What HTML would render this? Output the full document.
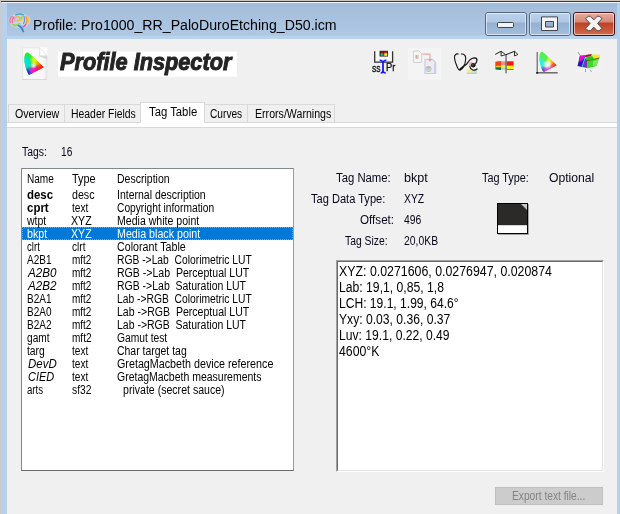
<!DOCTYPE html>
<html><head><meta charset="utf-8"><title>Profile Inspector</title>
<style>
html,body{margin:0;padding:0;}
body{width:620px;height:514px;position:relative;overflow:hidden;background:#b9d1ea;font-family:"Liberation Sans",sans-serif;}
.a{position:absolute;}
.t{position:absolute;white-space:pre;transform-origin:0 0;font-family:"Liberation Sans",sans-serif;}
#frame{left:0;top:0;width:620px;height:514px;background:#b9d1ea;}
#topbeige{left:0;top:0;width:620px;height:1px;background:#cbc7c0;}
#topdark{left:1px;top:1px;width:619px;height:1px;background:#3c3c3c;}
#topwhite{left:2px;top:2px;width:618px;height:1px;background:#eef4fb;}
#leftgray{left:0;top:1px;width:1px;height:513px;background:#c9c9cf;}
#title{left:2px;top:3px;width:618px;height:36px;background:linear-gradient(#a1bbda 0px,#a7c1de 14px,#aec8e4 32px,#b8d1ec 33.500px,#bad3ee 36px);}
#leftband{left:1px;top:3px;width:6px;height:511px;background:#b7d0eb;}
#rightband{left:617px;top:3px;width:3px;height:511px;background:#b7d0eb;}
#client{left:7px;top:39px;width:610px;height:475px;background:#f0f0f0;}
.cap{top:12px;height:24px;box-sizing:border-box;border:1px solid #55687f;border-radius:3px;}
.cap i{position:absolute;left:0;top:0;right:0;bottom:0;border:1px solid rgba(255,255,255,.55);border-radius:2px;}
.capb{background:linear-gradient(#bcd2eb 0,#b0c8e5 9px,#95b0d1 10px,#a3bddc 22px);}
.capr{background:linear-gradient(#e6ad9f 0,#d58875 9px,#bf4023 10px,#d06a4c 22px);border-color:#431418;}
#tabstrip{left:7px;top:122px;width:610px;height:6px;background:#fff;box-sizing:border-box;border-top:1px solid #d9d9d9;border-bottom:1px solid #d9d9d9;}
.tab{top:104px;height:18px;box-sizing:border-box;border:1px solid #d9d9d9;border-bottom:none;background:#f0f0f0;}
.tabsel{top:102px;height:20px;background:#fff;border:1px solid #d9d9d9;border-bottom:none;box-sizing:border-box;}
#list{left:21px;top:168px;width:273px;height:303px;box-sizing:border-box;background:#fff;border:1px solid #828790;border-right-color:#9a9a9a;border-bottom-color:#6a6a6a;}
#sel{left:22px;top:227px;width:271px;height:13px;background:#0078d7;box-sizing:border-box;border:1px dotted #e78b2d;}
#tbox{left:336px;top:260px;width:268px;height:212px;box-sizing:border-box;background:#fff;border-top:1px solid #a0a0a0;border-left:1px solid #a0a0a0;border-right:1px solid #fff;border-bottom:1px solid #fff;}
#tbox i{position:absolute;left:0;top:0;right:0;bottom:0;border-top:1px solid #696969;border-left:1px solid #696969;border-right:1px solid #e3e3e3;border-bottom:1px solid #e3e3e3;}
#btn{left:495px;top:487px;width:108px;height:18px;background:#cccccc;box-sizing:border-box;border:1px solid #bfbfbf;}
</style></head>
<body>
<div class="a" id="frame"></div>
<div class="a" id="title"></div>
<div class="a" id="leftband"></div>
<div class="a" id="rightband"></div>
<div class="a" id="topbeige"></div>
<div class="a" id="topdark"></div>
<div class="a" id="topwhite"></div>
<div class="a" id="leftgray"></div>
<div class="a" id="client"></div>

<!-- caption buttons -->
<div class="a cap capb" style="left:485px;width:42px;"><i></i></div>
<div class="a cap capb" style="left:529px;width:42px;"><i></i></div>
<div class="a cap capr" style="left:573px;width:42px;"><i></i></div>
<svg class="a" style="left:480px;top:0" width="140" height="40" viewBox="480 0 140 40">
  <rect x="497.5" y="22.5" width="16" height="5" fill="#f4f4f4" stroke="#3d4650" stroke-width="1" rx="1"/>
  <path d="M541.5 16.9h16v13.6h-16z M545.5 21.5v5.5h8v-5.5z" fill="#f4f4f4" fill-rule="evenodd" stroke="#3d4650" stroke-width="1" stroke-linejoin="round"/>
  <path d="M585.5 18.5l3-2.2h2l3.3 3.6 3.3-3.6h2l3 2.2-4.6 5 4.6 5-3 2.2h-2l-3.3-3.6-3.3 3.6h-2l-3-2.2 4.6-5z" fill="#f4f4f4" stroke="#5a4a4a" stroke-width="1" stroke-linejoin="round"/>
</svg>

<!-- app icon (brain) -->
<svg class="a" style="left:4px;top:8px" width="32" height="30" viewBox="4 8 32 30">
  <defs><filter id="bl" x="-20%" y="-20%" width="140%" height="140%"><feGaussianBlur stdDeviation=".45"/></filter></defs>
  <ellipse cx="19.500" cy="20.500" rx="11" ry="7.500" fill="#dfe4f2" opacity=".55" filter="url(#bl)"/>
  <g fill="none" stroke-linecap="round" filter="url(#bl)" opacity=".95">
    <path d="M15.500 14.800c2.500-1 5.500-1 8 0" stroke="#3aa6c8" stroke-width="1.300"/>
    <path d="M10.300 22.500c-.8-2.500 0-5 1.800-6.300M12.500 22.800c-.6-2.300 0-4.500 1.500-5.800" stroke="#ee6f96" stroke-width="1.400"/>
    <path d="M14.800 21.500c-.3-2 .3-3.800 1.600-4.800" stroke="#f29ab0" stroke-width="1.200"/>
    <path d="M16.500 17.200c1.200-.8 2.400-.6 3 .3M17 20.500c2 .4 4-.3 5.200-2.300" stroke="#f3b63c" stroke-width="1.400"/>
    <path d="M19.500 18.500c1.300-.2 2.400-1 3-2.200" stroke="#a6d64c" stroke-width="1.300"/>
    <path d="M12.500 24.300c2.300.9 5 .6 7-.9M14 25.600c1.500.4 3 .2 4-.4" stroke="#9bd45a" stroke-width="1.400"/>
    <path d="M24 16.500c.8 2.500.7 5-.3 7" stroke="#5b7fd8" stroke-width="1"/>
    <path d="M26 16.300c1.200 2.200 1.300 4.800.3 6.800" stroke="#f59a3c" stroke-width="1.500"/>
    <path d="M28 17.300c.9 1.800.9 3.800.1 5.300" stroke="#f6c64a" stroke-width="1.200"/>
    <path d="M22.800 26.800c1.300-.3 2.400-1.200 3-2.500" stroke="#ea4f8c" stroke-width="1.500"/>
    <path d="M18.500 25.500c2 1 3.800 3 4.800 6" stroke="#2f86cf" stroke-width="1.700"/>
    <path d="M20 25c1.500.3 2.800 1.500 3.300 3" stroke="#6bb4e6" stroke-width="1"/>
  </g>
</svg>

<!-- logo -->
<svg class="a" style="left:56px;top:50px" width="184" height="29" viewBox="56 50 184 29"><rect x="58" y="51.600" width="179" height="25.100" fill="#fff"/></svg>
<svg class="a" style="left:20px;top:45px" width="30" height="36" viewBox="20 45 30 36">
  <defs>
    <filter id="bd" x="-20%" y="-20%" width="140%" height="140%"><feGaussianBlur stdDeviation=".5"/></filter>
    <radialGradient id="aC" gradientUnits="userSpaceOnUse" cx="24.5" cy="63" r="9"><stop offset="0" stop-color="#00e4f4" stop-opacity="1"/><stop offset="0.55" stop-color="#00e0f0" stop-opacity="0.8"/><stop offset="1" stop-color="#00e0f0" stop-opacity="0"/></radialGradient>
    <radialGradient id="aY" gradientUnits="userSpaceOnUse" cx="36" cy="60" r="6.5"><stop offset="0" stop-color="#fcf800" stop-opacity="1"/><stop offset="0.5" stop-color="#f8f410" stop-opacity="0.8"/><stop offset="1" stop-color="#f0f020" stop-opacity="0"/></radialGradient>
    <radialGradient id="aB" gradientUnits="userSpaceOnUse" cx="27.5" cy="74.5" r="8"><stop offset="0" stop-color="#1010ff" stop-opacity="1"/><stop offset="0.5" stop-color="#1828ff" stop-opacity="0.85"/><stop offset="1" stop-color="#2050ff" stop-opacity="0"/></radialGradient>
    <radialGradient id="aM" gradientUnits="userSpaceOnUse" cx="34.5" cy="70.5" r="6.5"><stop offset="0" stop-color="#ff08e0" stop-opacity="1"/><stop offset="0.5" stop-color="#ff10d8" stop-opacity="0.85"/><stop offset="1" stop-color="#ff20c0" stop-opacity="0"/></radialGradient>
    <radialGradient id="aR" gradientUnits="userSpaceOnUse" cx="44" cy="67.3" r="8"><stop offset="0" stop-color="#ff0808" stop-opacity="1"/><stop offset="0.45" stop-color="#ff2010" stop-opacity="0.85"/><stop offset="1" stop-color="#ff5010" stop-opacity="0"/></radialGradient>
    <radialGradient id="aW" gradientUnits="userSpaceOnUse" cx="33.5" cy="65.5" r="3.5"><stop offset="0" stop-color="#ffffff" stop-opacity="1"/><stop offset="0.4" stop-color="#ffffff" stop-opacity="0.6"/><stop offset="1" stop-color="#ffffff" stop-opacity="0"/></radialGradient>
    <radialGradient id="bC" gradientUnits="userSpaceOnUse" cx="24.5" cy="66" r="8"><stop offset="0" stop-color="#20f0ff" stop-opacity="1"/><stop offset="0.55" stop-color="#30f0ff" stop-opacity="0.8"/><stop offset="1" stop-color="#30f0ff" stop-opacity="0"/></radialGradient>
    <radialGradient id="bY" gradientUnits="userSpaceOnUse" cx="37.5" cy="61.5" r="6"><stop offset="0" stop-color="#fcfc20" stop-opacity="1"/><stop offset="0.5" stop-color="#f8f830" stop-opacity="0.8"/><stop offset="1" stop-color="#f0f040" stop-opacity="0"/></radialGradient>
    <radialGradient id="bB" gradientUnits="userSpaceOnUse" cx="28" cy="75" r="7"><stop offset="0" stop-color="#2828ff" stop-opacity="1"/><stop offset="0.5" stop-color="#3040ff" stop-opacity="0.8"/><stop offset="1" stop-color="#4060ff" stop-opacity="0"/></radialGradient>
    <radialGradient id="bM" gradientUnits="userSpaceOnUse" cx="34" cy="72.5" r="6"><stop offset="0" stop-color="#ff30f0" stop-opacity="1"/><stop offset="0.5" stop-color="#ff40e8" stop-opacity="0.8"/><stop offset="1" stop-color="#ff50e0" stop-opacity="0"/></radialGradient>
    <radialGradient id="bR" gradientUnits="userSpaceOnUse" cx="44" cy="67.3" r="7"><stop offset="0" stop-color="#ff1818" stop-opacity="1"/><stop offset="0.5" stop-color="#ff3828" stop-opacity="0.85"/><stop offset="1" stop-color="#ff6030" stop-opacity="0"/></radialGradient>
    <radialGradient id="bW" gradientUnits="userSpaceOnUse" cx="33.5" cy="66.5" r="5.2"><stop offset="0" stop-color="#ffffff" stop-opacity="1"/><stop offset="0.45" stop-color="#ffffff" stop-opacity="0.75"/><stop offset="1" stop-color="#ffffff" stop-opacity="0"/></radialGradient>
    <radialGradient id="aO" gradientUnits="userSpaceOnUse" cx="40" cy="63.8" r="5.5"><stop offset="0" stop-color="#ffb000" stop-opacity="1"/><stop offset="0.5" stop-color="#ffa000" stop-opacity="0.8"/><stop offset="1" stop-color="#ff9000" stop-opacity="0"/></radialGradient>
    <radialGradient id="aP" gradientUnits="userSpaceOnUse" cx="39" cy="69.3" r="5"><stop offset="0" stop-color="#ff1050" stop-opacity="1"/><stop offset="0.5" stop-color="#ff1060" stop-opacity="0.8"/><stop offset="1" stop-color="#ff2070" stop-opacity="0"/></radialGradient>
    <radialGradient id="bO" gradientUnits="userSpaceOnUse" cx="40" cy="64" r="5"><stop offset="0" stop-color="#ffc020" stop-opacity="1"/><stop offset="0.5" stop-color="#ffb020" stop-opacity="0.8"/><stop offset="1" stop-color="#ffa020" stop-opacity="0"/></radialGradient>
    <radialGradient id="bP" gradientUnits="userSpaceOnUse" cx="39" cy="69.5" r="4.5"><stop offset="0" stop-color="#ff4080" stop-opacity="1"/><stop offset="0.5" stop-color="#ff4080" stop-opacity="0.7"/><stop offset="1" stop-color="#ff5090" stop-opacity="0"/></radialGradient>
    <path id="gp" d="M26.600 52.600C28 52.200 29 53 30 54L43.800 67.300 30.500 74.300C29.500 75 28.500 74.800 28 73.500 26 69 24 63 24.400 58 24.600 55 25.300 53.200 26.600 52.600Z"/>
    <g id="gamutA"><use href="#gp" fill="#20f020"/><use href="#gp" fill="url(#aC)"/><use href="#gp" fill="url(#aY)"/><use href="#gp" fill="url(#aO)"/><use href="#gp" fill="url(#aB)"/><use href="#gp" fill="url(#aM)"/><use href="#gp" fill="url(#aP)"/><use href="#gp" fill="url(#aR)"/><use href="#gp" fill="url(#aW)"/></g>
    <g id="gamutB"><use href="#gp" fill="#50f250"/><use href="#gp" fill="url(#bC)"/><use href="#gp" fill="url(#bY)"/><use href="#gp" fill="url(#bO)"/><use href="#gp" fill="url(#bB)"/><use href="#gp" fill="url(#bM)"/><use href="#gp" fill="url(#bP)"/><use href="#gp" fill="url(#bR)"/><use href="#gp" fill="url(#bW)"/></g>
    <linearGradient id="pg" x1="0" y1="0" x2="1" y2="0"><stop offset="0" stop-color="#f1f1f1"/><stop offset=".12" stop-color="#fafafa"/><stop offset=".85" stop-color="#f7f7f7"/><stop offset="1" stop-color="#e6e6e6"/></linearGradient>
  </defs>
  <rect x="38" y="47.500" width="9.200" height="9" fill="#fff"/>
  <path d="M22.500 47.800h17l7.500 8v23.700h-24.500z" fill="url(#pg)" stroke="#e4e4e4" stroke-width=".8"/>
  <path d="M39.500 48l7.500 7.800v3.500l-8-3z" fill="#c8c8c8" opacity=".6" filter="url(#bd)"/>
  <path d="M39.500 47.800l7.500 8h-5c-1.800 0-2.500-.8-2.500-2.500z" fill="#fdfdfd" stroke="#e0e0e0" stroke-width=".6"/>
  <path d="M22.500 79.500h24.500" stroke="#d8d8d8" stroke-width="1"/>
  <use href="#gamutA"/>
</svg>

<!-- toolbar icons -->
<svg class="a" style="left:365px;top:42px" width="245" height="40" viewBox="365 42 245 40">
  <defs>
    <filter id="b3" x="-20%" y="-20%" width="140%" height="140%"><feGaussianBlur stdDeviation=".35"/></filter>
    <filter id="b6" x="-20%" y="-20%" width="140%" height="140%"><feGaussianBlur stdDeviation=".55"/></filter>
  </defs>
  <!-- icon1 -->
  <path d="M374.700 51.300v10.900h17.900v-10.900" fill="#f8f8f8" stroke="#333" stroke-width="1.300"/>
  <rect x="379.600" y="50.800" width="8.300" height="5.700" fill="#111"/>
  <rect x="380.500" y="51.300" width="3.100" height="1.500" fill="#c01818"/><rect x="384.200" y="51.300" width="3" height="1.500" fill="#f01818"/>
  <rect x="380.500" y="53.200" width="3.100" height="2.700" fill="#20b080"/><rect x="384.200" y="53.200" width="3" height="2.700" fill="#f4f010"/>
  <path d="M379.600 60.300c2.200 0 3.300 1 3.300 2.800v7.900c0 1.200-.8 1.900-2.200 2M386.400 60.300c-2.200 0-3.300 1-3.300 2.800v7.900c0 1.200.8 1.900 2.600 2" fill="none" stroke="#1818ff" stroke-width="1.600"/>
  <!-- icon2 faded -->
  <rect x="408" y="48" width="33" height="31.800" fill="#f4f4f4"/>
  <path d="M413.500 51h5.500l2.700 2.700v8.800h-8.200z" fill="#f5f5f5" stroke="#cdcdcd" stroke-width=".9"/>
  <rect x="415.500" y="55" width="1.600" height="3.800" fill="#d8a8a0"/><rect x="417.100" y="55" width="1.500" height="3.800" fill="#b8d8a8"/>
  <path d="M425 59.200h7.300l3.400 3.400v10.900h-10.700z" fill="#ececf4" stroke="#c6c8e4" stroke-width="1.100"/>
  <path d="M434.600 63v10" stroke="#cfd0ea" stroke-width="1.400" fill="none"/>
  <path d="M422.300 54.200h7.600v5.500" fill="none" stroke="#f2a6a6" stroke-width="1.200"/>
  <path d="M427.700 59h4.400l-2.200 2.800z" fill="#f09c9c"/>
  <g filter="url(#b3)"><circle cx="428.600" cy="69" r="2.900" fill="#b8b8c4"/><path d="M428.600 69l-2.300-1.200a2.600 2.600 0 0 1 4.600-.2z" fill="#f0a8a8"/><path d="M428.600 69l2.300-1.400a2.600 2.600 0 0 1-1.600 3.900z" fill="#b4e4a4"/><path d="M428.600 69l.7 2.500a2.600 2.600 0 0 1-3-3.700z" fill="#c4d0f0"/></g>
  <!-- icon3 stethoscope -->
  <path d="M468 67l4-1 5 2.500v4.500h-10.500z" fill="#fbfbf3"/>
  <path d="M467.600 68.500h4.300l.3 4h-5.400z" fill="#f3ee82"/>
  <path d="M472.200 70h4.800v2.800h-4.800z" fill="#bfe8cc"/>
  <path d="M466.500 73.200h10.600" stroke="#b4b4b4" stroke-width="1" fill="none"/>
  <circle cx="471" cy="64" r="2.200" fill="#f2b4bc" filter="url(#b3)"/>
  <g fill="none" stroke="#151515" stroke-width="1.100" stroke-linecap="round" stroke-linejoin="round">
    <path d="M458.300 54c-1.300-.2-2.300 0-2.800.7-1 .8-1.200 1.800-1 3.100.2 2.200.8 4.200 1.600 6.200.6 1.800 1.300 3.600 2.200 5 .5.800 1.100 1.100 1.700.9"/>
    <path d="M461.400 54c1.300-.1 2.400.2 3.100 1 1 1 1.300 2.200 1.200 3.500-.1 2-.4 3.800-.9 5.500-.5 1.400-1.400 2.600-2.500 3.500-.8.700-1.600 1.500-2.300 2.300"/>
    <path d="M459.600 69.600c.6-1.200 1.800-2.200 3.200-2.700M460.200 70c1.500-.5 2.600-1.500 3-2.900"/>
    <path d="M463 67c1.400-1 2.600-2 3.700-3 1.200-1.600 2.300-3.300 3.700-4.600 1.300-1 2.800-1.600 4.400-1.600 1.400.1 2.200 1 2.200 2.200-.1 1.500-.8 2.900-1.600 4" stroke-width="1.250"/>
    <path d="M469.800 66.500c.2 1.500 1.300 2.800 3.100 3.500 1.500.4 3 0 4.100-1" stroke-width="1.250"/>
  </g>
  <circle cx="473.200" cy="65.300" r="2.300" fill="#1c1c1c"/><circle cx="472.900" cy="64.900" r=".7" fill="#7a8a80"/>
  <!-- icon4 balance -->
  <g filter="url(#b3)">
  <path d="M495.500 61.800l5.700-.5v8.700l-5.700-.5z" fill="#0c6a40"/>
  <path d="M496 62l5.200-.4v4l-5.200.2z" fill="#f04418"/>
  <path d="M496 65.800l5.200-.2v1.600l-5.200.2z" fill="#f0c020"/>
  <rect x="501.200" y="61.300" width="5" height="3.800" fill="#f48c84"/><rect x="501.200" y="65.100" width="5" height="2.400" fill="#f4ee50"/><rect x="501.200" y="67.500" width="5" height="2.300" fill="#a0dcb0"/>
  <rect x="506.800" y="61.300" width="6.800" height="4.500" fill="#f01c10"/><rect x="506.800" y="65.800" width="6.800" height="3.300" fill="#f8f410"/><rect x="506.800" y="69.100" width="6.800" height=".9" fill="#508030"/>
  </g>
  <rect x="505.500" y="54.700" width="1.100" height="18.700" fill="#4c4c4c"/>
  <path d="M495.200 54.400l5.900-3.100M506 54.700l8.500-3.400" fill="none" stroke="#1a1a1a" stroke-width="1"/>
  <path d="M501.100 51.300v4.700l4.600-1.300zM514.500 51.300v4.700l3.400-1.600z" fill="#fafafa" stroke="#1a1a1a" stroke-width=".9" stroke-linejoin="round"/>
  <!-- icon5 chromaticity -->
  <use href="#gamutB" transform="translate(517.600 5.100) scale(.893 .893)"/>
  <path d="M537.200 52v21" fill="none" stroke="#666" stroke-width="1.200"/>
  <path d="M536.200 72.800h21.500" fill="none" stroke="#606060" stroke-width="1.400"/>
  <rect x="536.200" y="72" width="2" height="1.600" fill="#222"/>
  <!-- icon6 3d gamut -->
  <rect x="576" y="48" width="24.500" height="24" fill="#f6f6f6" opacity=".4"/>
  <g filter="url(#b6)">
    <path d="M580 55.500l5 2.500-3 9-4.500-1z" fill="#3010c0"/>
    <path d="M580 55.500l5.500-.5-.5 3-3.500 3-2.500.5z" fill="#e010d0"/>
    <path d="M585 58l2.500 2 0 8-5.500-1z" fill="#7030c0"/>
    <path d="M585.500 55l6.500-1 -1 2.300-6 1z" fill="#b80818"/>
    <path d="M586 57.300l6-1.300 4 2-9.500 2.700z" fill="#18d018"/>
    <path d="M591.500 54.500l8.700.3-1 3.700-5.200.5z" fill="#f0ec20"/>
    <path d="M587 60.500l12-2.500-2.500 8-9 2.500z" fill="#40d828"/>
    <path d="M593 61l5.500-1.700-1.500 5.700-4 1z" fill="#80e860"/>
    <path d="M585 58l-3 9" stroke="#10d8e8" stroke-width="1" fill="none"/>
    <path d="M586 61l13.500-3" stroke="#6a4010" stroke-width=".8" fill="none"/>
  </g>
  <path d="M578 52l2 3.500M585.500 69v3M590 69.500l1.500 2.500" fill="none" stroke="#808080" stroke-width=".7"/>
</svg>

<!-- tabs -->
<div class="a" id="tabstrip"></div>
<div class="a tab" style="left:8px;width:57px;"></div>
<div class="a tab" style="left:64px;width:77px;"></div>
<div class="a tab" style="left:204px;width:44px;"></div>
<div class="a tab" style="left:247px;width:88px;"></div>
<div class="a tabsel" style="left:140px;width:65px;"></div>
<div class="a" style="left:141px;top:122px;width:63px;height:1px;background:#fff;"></div>

<!-- list -->
<div class="a" id="list"></div>
<div class="a" id="sel"></div>

<!-- tag icon -->
<div class="a" style="left:498px;top:204px;width:31px;height:31px;background:#a6a6a6;"></div>
<svg class="a" style="left:496px;top:202px" width="34" height="34" viewBox="496 202 34 34">
  <rect x="497.500" y="203.500" width="30" height="30" fill="#fff" stroke="#000" stroke-width="1"/>
  <rect x="498" y="204" width="29" height="21.200" fill="#2b2a29"/>
  <path d="M521 204h6v6z" fill="#c8c8c8"/>
</svg>

<!-- text box -->
<div class="a" id="tbox"><i></i></div>
<!-- button -->
<div class="a" id="btn"></div>

<span class="t" style="left:33.40px;top:17.05px;font-size:15.3px;line-height:15.3px;transform:scaleX(0.9250);color:#000">Profile: Pro1000_RR_PaloDuroEtching_D50.icm</span>
<span class="t" style="left:60.20px;top:51.33px;font-size:23px;line-height:23px;transform:scaleX(0.9444);font-weight:bold;font-style:italic;color:#242424;-webkit-text-stroke:0.95px #242424">Profile Inspector</span>
<span class="t" style="left:22.00px;top:145.84px;font-size:12px;line-height:12px;transform:scaleX(0.8645);color:#06061a">Tags:</span>
<span class="t" style="left:60.70px;top:145.84px;font-size:12px;line-height:12px;transform:scaleX(0.8458);color:#06061a">16</span>
<span class="t" style="left:26.70px;top:173.42px;font-size:12.5px;line-height:12.5px;transform:scaleX(0.8037);color:#000">Name</span>
<span class="t" style="left:71.50px;top:173.42px;font-size:12.5px;line-height:12.5px;transform:scaleX(0.8705);color:#000">Type</span>
<span class="t" style="left:116.80px;top:173.42px;font-size:12.5px;line-height:12.5px;transform:scaleX(0.8412);color:#000">Description</span>
<span class="t" style="left:26.70px;top:189.42px;font-size:12.5px;line-height:12.5px;transform:scaleX(0.9158);color:#000;font-weight:bold">desc</span>
<span class="t" style="left:71.50px;top:189.42px;font-size:12.5px;line-height:12.5px;transform:scaleX(0.8521);color:#000">desc</span>
<span class="t" style="left:116.80px;top:189.42px;font-size:12.5px;line-height:12.5px;transform:scaleX(0.8398);color:#000">Internal description</span>
<span class="t" style="left:26.70px;top:202.42px;font-size:12.5px;line-height:12.5px;transform:scaleX(0.9185);color:#000;font-weight:bold">cprt</span>
<span class="t" style="left:71.50px;top:202.42px;font-size:12.5px;line-height:12.5px;transform:scaleX(0.8087);color:#000">text</span>
<span class="t" style="left:116.80px;top:202.42px;font-size:12.5px;line-height:12.5px;transform:scaleX(0.8173);color:#000">Copyright information</span>
<span class="t" style="left:26.70px;top:215.42px;font-size:12.5px;line-height:12.5px;transform:scaleX(0.8414);color:#000">wtpt</span>
<span class="t" style="left:71.00px;top:215.42px;font-size:12.5px;line-height:12.5px;transform:scaleX(0.8473);color:#000">XYZ</span>
<span class="t" style="left:116.80px;top:215.42px;font-size:12.5px;line-height:12.5px;transform:scaleX(0.8450);color:#000">Media white point</span>
<span class="t" style="left:26.70px;top:228.42px;font-size:12.5px;line-height:12.5px;transform:scaleX(0.8587);color:#fff">bkpt</span>
<span class="t" style="left:71.00px;top:228.42px;font-size:12.5px;line-height:12.5px;transform:scaleX(0.8473);color:#fff">XYZ</span>
<span class="t" style="left:116.80px;top:228.42px;font-size:12.5px;line-height:12.5px;transform:scaleX(0.8553);color:#fff">Media black point</span>
<span class="t" style="left:26.70px;top:241.42px;font-size:12.5px;line-height:12.5px;transform:scaleX(0.7678);color:#000">clrt</span>
<span class="t" style="left:71.50px;top:241.42px;font-size:12.5px;line-height:12.5px;transform:scaleX(0.8097);color:#000">clrt</span>
<span class="t" style="left:116.80px;top:241.42px;font-size:12.5px;line-height:12.5px;transform:scaleX(0.8546);color:#000">Colorant Table</span>
<span class="t" style="left:26.70px;top:254.42px;font-size:12.5px;line-height:12.5px;transform:scaleX(0.8008);color:#000">A2B1</span>
<span class="t" style="left:71.50px;top:254.42px;font-size:12.5px;line-height:12.5px;transform:scaleX(0.7979);color:#000">mft2</span>
<span class="t" style="left:116.80px;top:254.42px;font-size:12.5px;line-height:12.5px;transform:scaleX(0.8240);color:#000">RGB -&gt;Lab  Colorimetric LUT</span>
<span class="t" style="left:28.00px;top:267.42px;font-size:12.5px;line-height:12.5px;transform:scaleX(0.9316);color:#000;font-style:italic">A2B0</span>
<span class="t" style="left:71.50px;top:267.42px;font-size:12.5px;line-height:12.5px;transform:scaleX(0.7979);color:#000">mft2</span>
<span class="t" style="left:116.80px;top:267.42px;font-size:12.5px;line-height:12.5px;transform:scaleX(0.8438);color:#000">RGB -&gt;Lab  Perceptual LUT</span>
<span class="t" style="left:28.00px;top:280.42px;font-size:12.5px;line-height:12.5px;transform:scaleX(0.9316);color:#000;font-style:italic">A2B2</span>
<span class="t" style="left:71.50px;top:280.42px;font-size:12.5px;line-height:12.5px;transform:scaleX(0.7979);color:#000">mft2</span>
<span class="t" style="left:116.80px;top:280.42px;font-size:12.5px;line-height:12.5px;transform:scaleX(0.8382);color:#000">RGB -&gt;Lab  Saturation LUT</span>
<span class="t" style="left:26.70px;top:293.42px;font-size:12.5px;line-height:12.5px;transform:scaleX(0.8008);color:#000">B2A1</span>
<span class="t" style="left:71.50px;top:293.42px;font-size:12.5px;line-height:12.5px;transform:scaleX(0.7979);color:#000">mft2</span>
<span class="t" style="left:116.80px;top:293.42px;font-size:12.5px;line-height:12.5px;transform:scaleX(0.8240);color:#000">Lab -&gt;RGB  Colorimetric LUT</span>
<span class="t" style="left:26.70px;top:306.42px;font-size:12.5px;line-height:12.5px;transform:scaleX(0.8008);color:#000">B2A0</span>
<span class="t" style="left:71.50px;top:306.42px;font-size:12.5px;line-height:12.5px;transform:scaleX(0.7979);color:#000">mft2</span>
<span class="t" style="left:116.80px;top:306.42px;font-size:12.5px;line-height:12.5px;transform:scaleX(0.8438);color:#000">Lab -&gt;RGB  Perceptual LUT</span>
<span class="t" style="left:26.70px;top:319.42px;font-size:12.5px;line-height:12.5px;transform:scaleX(0.8008);color:#000">B2A2</span>
<span class="t" style="left:71.50px;top:319.42px;font-size:12.5px;line-height:12.5px;transform:scaleX(0.7979);color:#000">mft2</span>
<span class="t" style="left:116.80px;top:319.42px;font-size:12.5px;line-height:12.5px;transform:scaleX(0.8382);color:#000">Lab -&gt;RGB  Saturation LUT</span>
<span class="t" style="left:26.70px;top:332.42px;font-size:12.5px;line-height:12.5px;transform:scaleX(0.8094);color:#000">gamt</span>
<span class="t" style="left:71.50px;top:332.42px;font-size:12.5px;line-height:12.5px;transform:scaleX(0.8021);color:#000">mft2</span>
<span class="t" style="left:116.80px;top:332.42px;font-size:12.5px;line-height:12.5px;transform:scaleX(0.8211);color:#000">Gamut test</span>
<span class="t" style="left:26.70px;top:345.42px;font-size:12.5px;line-height:12.5px;transform:scaleX(0.8261);color:#000">targ</span>
<span class="t" style="left:71.50px;top:345.42px;font-size:12.5px;line-height:12.5px;transform:scaleX(0.8087);color:#000">text</span>
<span class="t" style="left:116.80px;top:345.42px;font-size:12.5px;line-height:12.5px;transform:scaleX(0.8358);color:#000">Char target tag</span>
<span class="t" style="left:28.00px;top:358.42px;font-size:12.5px;line-height:12.5px;transform:scaleX(0.9179);color:#000;font-style:italic">DevD</span>
<span class="t" style="left:71.50px;top:358.42px;font-size:12.5px;line-height:12.5px;transform:scaleX(0.8087);color:#000">text</span>
<span class="t" style="left:116.80px;top:358.42px;font-size:12.5px;line-height:12.5px;transform:scaleX(0.8591);color:#000">GretagMacbeth device reference</span>
<span class="t" style="left:28.00px;top:371.42px;font-size:12.5px;line-height:12.5px;transform:scaleX(0.8770);color:#000;font-style:italic">CIED</span>
<span class="t" style="left:71.50px;top:371.42px;font-size:12.5px;line-height:12.5px;transform:scaleX(0.8087);color:#000">text</span>
<span class="t" style="left:116.80px;top:371.42px;font-size:12.5px;line-height:12.5px;transform:scaleX(0.8386);color:#000">GretagMacbeth measurements</span>
<span class="t" style="left:26.70px;top:384.42px;font-size:12.5px;line-height:12.5px;transform:scaleX(0.7724);color:#000">arts</span>
<span class="t" style="left:71.50px;top:384.42px;font-size:12.5px;line-height:12.5px;transform:scaleX(0.8249);color:#000">sf32</span>
<span class="t" style="left:122.60px;top:384.42px;font-size:12.5px;line-height:12.5px;transform:scaleX(0.8453);color:#000">private (secret sauce)</span>
<span class="t" style="left:335.80px;top:171.84px;font-size:12px;line-height:12px;transform:scaleX(0.9426);color:#06061a">Tag Name:</span>
<span class="t" style="left:310.50px;top:192.84px;font-size:12px;line-height:12px;transform:scaleX(0.9230);color:#06061a">Tag Data Type:</span>
<span class="t" style="left:360.30px;top:213.84px;font-size:12px;line-height:12px;transform:scaleX(0.9704);color:#06061a">Offset:</span>
<span class="t" style="left:344.80px;top:234.84px;font-size:12px;line-height:12px;transform:scaleX(0.8631);color:#06061a">Tag Size:</span>
<span class="t" style="left:404.20px;top:171.84px;font-size:12px;line-height:12px;transform:scaleX(1.0490);color:#06061a">bkpt</span>
<span class="t" style="left:404.20px;top:192.84px;font-size:12px;line-height:12px;transform:scaleX(0.8610);color:#06061a">XYZ</span>
<span class="t" style="left:404.20px;top:213.84px;font-size:12px;line-height:12px;transform:scaleX(0.8637);color:#06061a">496</span>
<span class="t" style="left:404.20px;top:234.84px;font-size:12px;line-height:12px;transform:scaleX(0.8660);color:#06061a">20,0KB</span>
<span class="t" style="left:481.60px;top:171.84px;font-size:12px;line-height:12px;transform:scaleX(0.9049);color:#06061a">Tag Type:</span>
<span class="t" style="left:548.60px;top:171.84px;font-size:12px;line-height:12px;transform:scaleX(1.0134);color:#06061a">Optional</span>
<span class="t" style="left:339.00px;top:264.15px;font-size:14px;line-height:14px;transform:scaleX(0.8826);color:#000">XYZ: 0.0271606, 0.0276947, 0.020874</span>
<span class="t" style="left:339.00px;top:280.15px;font-size:14px;line-height:14px;transform:scaleX(0.8702);color:#000">Lab: 19,1, 0,85, 1,8</span>
<span class="t" style="left:339.00px;top:296.15px;font-size:14px;line-height:14px;transform:scaleX(0.8624);color:#000">LCH: 19.1, 1.99, 64.6°</span>
<span class="t" style="left:339.00px;top:312.15px;font-size:14px;line-height:14px;transform:scaleX(0.8667);color:#000">Yxy: 0.03, 0.36, 0.37</span>
<span class="t" style="left:339.00px;top:328.15px;font-size:14px;line-height:14px;transform:scaleX(0.8664);color:#000">Luv: 19.1, 0.22, 0.49</span>
<span class="t" style="left:339.00px;top:344.15px;font-size:14px;line-height:14px;transform:scaleX(0.8765);color:#000">4600°K</span>
<span class="t" style="left:511.90px;top:490.02px;font-size:12.5px;line-height:12.5px;transform:scaleX(0.8179);color:#838383">Export text file...</span>
<span class="t" style="left:14.70px;top:108.42px;font-size:12.5px;line-height:12.5px;transform:scaleX(0.8504);color:#000">Overview</span>
<span class="t" style="left:71.40px;top:108.42px;font-size:12.5px;line-height:12.5px;transform:scaleX(0.8326);color:#000">Header Fields</span>
<span class="t" style="left:149.20px;top:106.42px;font-size:12.5px;line-height:12.5px;transform:scaleX(0.9044);color:#000">Tag Table</span>
<span class="t" style="left:209.80px;top:108.42px;font-size:12.5px;line-height:12.5px;transform:scaleX(0.8133);color:#000">Curves</span>
<span class="t" style="left:254.70px;top:108.42px;font-size:12.5px;line-height:12.5px;transform:scaleX(0.8493);color:#000">Errors/Warnings</span>
<span class="t" style="left:371.90px;top:63.11px;font-size:10.5px;line-height:10.5px;transform:scaleX(0.8286);color:#111;-webkit-text-stroke:.3px #111">ss</span>
<span class="t" style="left:385.60px;top:63.28px;font-size:10.3px;line-height:10.3px;transform:scaleX(0.9129);color:#111;-webkit-text-stroke:.3px #111">Pr</span>
</body></html>
